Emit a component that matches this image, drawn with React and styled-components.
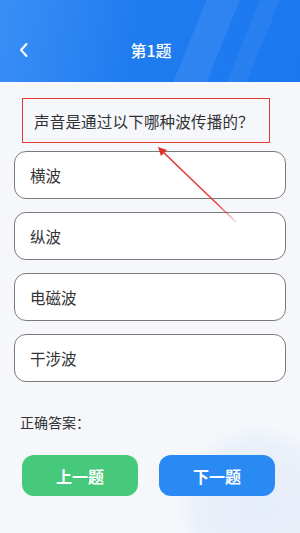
import React from 'react'
import styled, { createGlobalStyle } from 'styled-components';

const options = ['横波', '纵波', '电磁波', '干涉波'];

const App = () => {
    return (
        <>
            <GlobalStyle />
            <Page>
                <Header>
                    <BackButton>
                        <svg width="12" height="16" viewBox="0 0 12 16">
                            <path d="M8.5 2 L3 8 L8.5 14" fill="none" stroke="#fff" strokeWidth="2" strokeLinecap="round" strokeLinejoin="round" />
                        </svg>
                    </BackButton>
                    <Title>第1题</Title>
                    <span />
                </Header>

                <Body>
                    <Question>声音是通过以下哪种波传播的？</Question>

                    <OptionList>
                        {
                            options.map(item => (
                                <Option key={item}>{item}</Option>
                            ))
                        }
                    </OptionList>

                    <Answer>正确答案：</Answer>

                    <ButtonRow>
                        <NavButton color="#46c97a">上一题</NavButton>
                        <NavButton color="#2a8af4">下一题</NavButton>
                    </ButtonRow>
                </Body>

                <Arrow width="300" height="533" viewBox="0 0 300 533">
                    <defs>
                        <linearGradient id="arrowFade" x1="159" y1="148" x2="236" y2="222" gradientUnits="userSpaceOnUse">
                            <stop offset="0" stopColor="#e0302b" />
                            <stop offset="0.75" stopColor="#e0302b" stopOpacity="0.9" />
                            <stop offset="1" stopColor="#e0302b" stopOpacity="0.15" />
                        </linearGradient>
                    </defs>
                    <path d="M162 151 L236 222" stroke="url(#arrowFade)" strokeWidth="1.6" />
                    <path d="M158 147 L167 150 L161 156 Z" fill="#e0302b" />
                </Arrow>
            </Page>
        </>
    )
}

export default App;

const GlobalStyle = createGlobalStyle`
    body {
        margin: 0;
        font-family: "Noto Sans CJK SC", "Noto Sans", sans-serif;
        background: #f5f7fb;
    }
`;

const Page = styled.div`
    position: relative;
    width: 300px;
    height: 533px;
    overflow: hidden;
    background:
        radial-gradient(circle at 258px 505px, rgba(224, 234, 249, 0.75) 0, rgba(224, 234, 249, 0.5) 62px, rgba(245, 247, 251, 0) 82px),
        #f5f7fb;
`;

const Header = styled.div`
    height: 82px;
    box-sizing: border-box;
    padding: 32px 16px 0 18px;
    display: grid;
    grid-template-columns: 40px 1fr 40px;
    align-items: center;
    align-content: start;
    background:
        linear-gradient(112deg, rgba(255,255,255,0) 62%, rgba(255,255,255,0.08) 62%, rgba(255,255,255,0.08) 72%, rgba(255,255,255,0) 72%),
        linear-gradient(112deg, rgba(255,255,255,0) 78%, rgba(255,255,255,0.05) 78%, rgba(255,255,255,0.05) 84%, rgba(255,255,255,0) 84%),
        linear-gradient(100deg, #3a8ff5 0%, #1f7cf0 45%, #1b78ef 100%);
`;

const BackButton = styled.div`
    display: flex;
    align-items: center;
    height: 36px;
`;

const Title = styled.div`
    text-align: center;
    color: #fff;
    font-size: 16px;
    font-weight: 500;
    line-height: 36px;
`;

const Body = styled.div`
    padding: 16px 14px 0 14px;
`;

const Question = styled.div`
    margin: 0 16px 0 8px;
    height: 45px;
    box-sizing: border-box;
    border: 1.5px solid #e33a34;
    display: flex;
    align-items: center;
    padding-left: 11px;
    font-size: 15.5px;
    color: #333;
    letter-spacing: 0.2px;
`;

const OptionList = styled.div`
    margin-top: 8px;
    display: flex;
    flex-direction: column;
    gap: 13px;
`;

const Option = styled.div`
    height: 48px;
    box-sizing: border-box;
    border: 1.5px solid #7a7a7a;
    border-radius: 12px;
    background: #fff;
    display: flex;
    align-items: center;
    padding-left: 15px;
    font-size: 15.5px;
    color: #333;
`;

const Answer = styled.div`
    margin-top: 30px;
    padding-left: 6px;
    font-size: 14px;
    color: #333;
`;

const ButtonRow = styled.div`
    margin-top: 23px;
    padding: 0 11px 0 8px;
    display: flex;
    justify-content: space-between;
`;

const NavButton = styled.div`
    width: 116px;
    height: 41px;
    border-radius: 12px;
    background: ${props => props.color};
    color: #fff;
    font-size: 16px;
    font-weight: 700;
    display: flex;
    align-items: center;
    justify-content: center;
`;

const Arrow = styled.svg`
    position: absolute;
    left: 0;
    top: 0;
    pointer-events: none;
`;
